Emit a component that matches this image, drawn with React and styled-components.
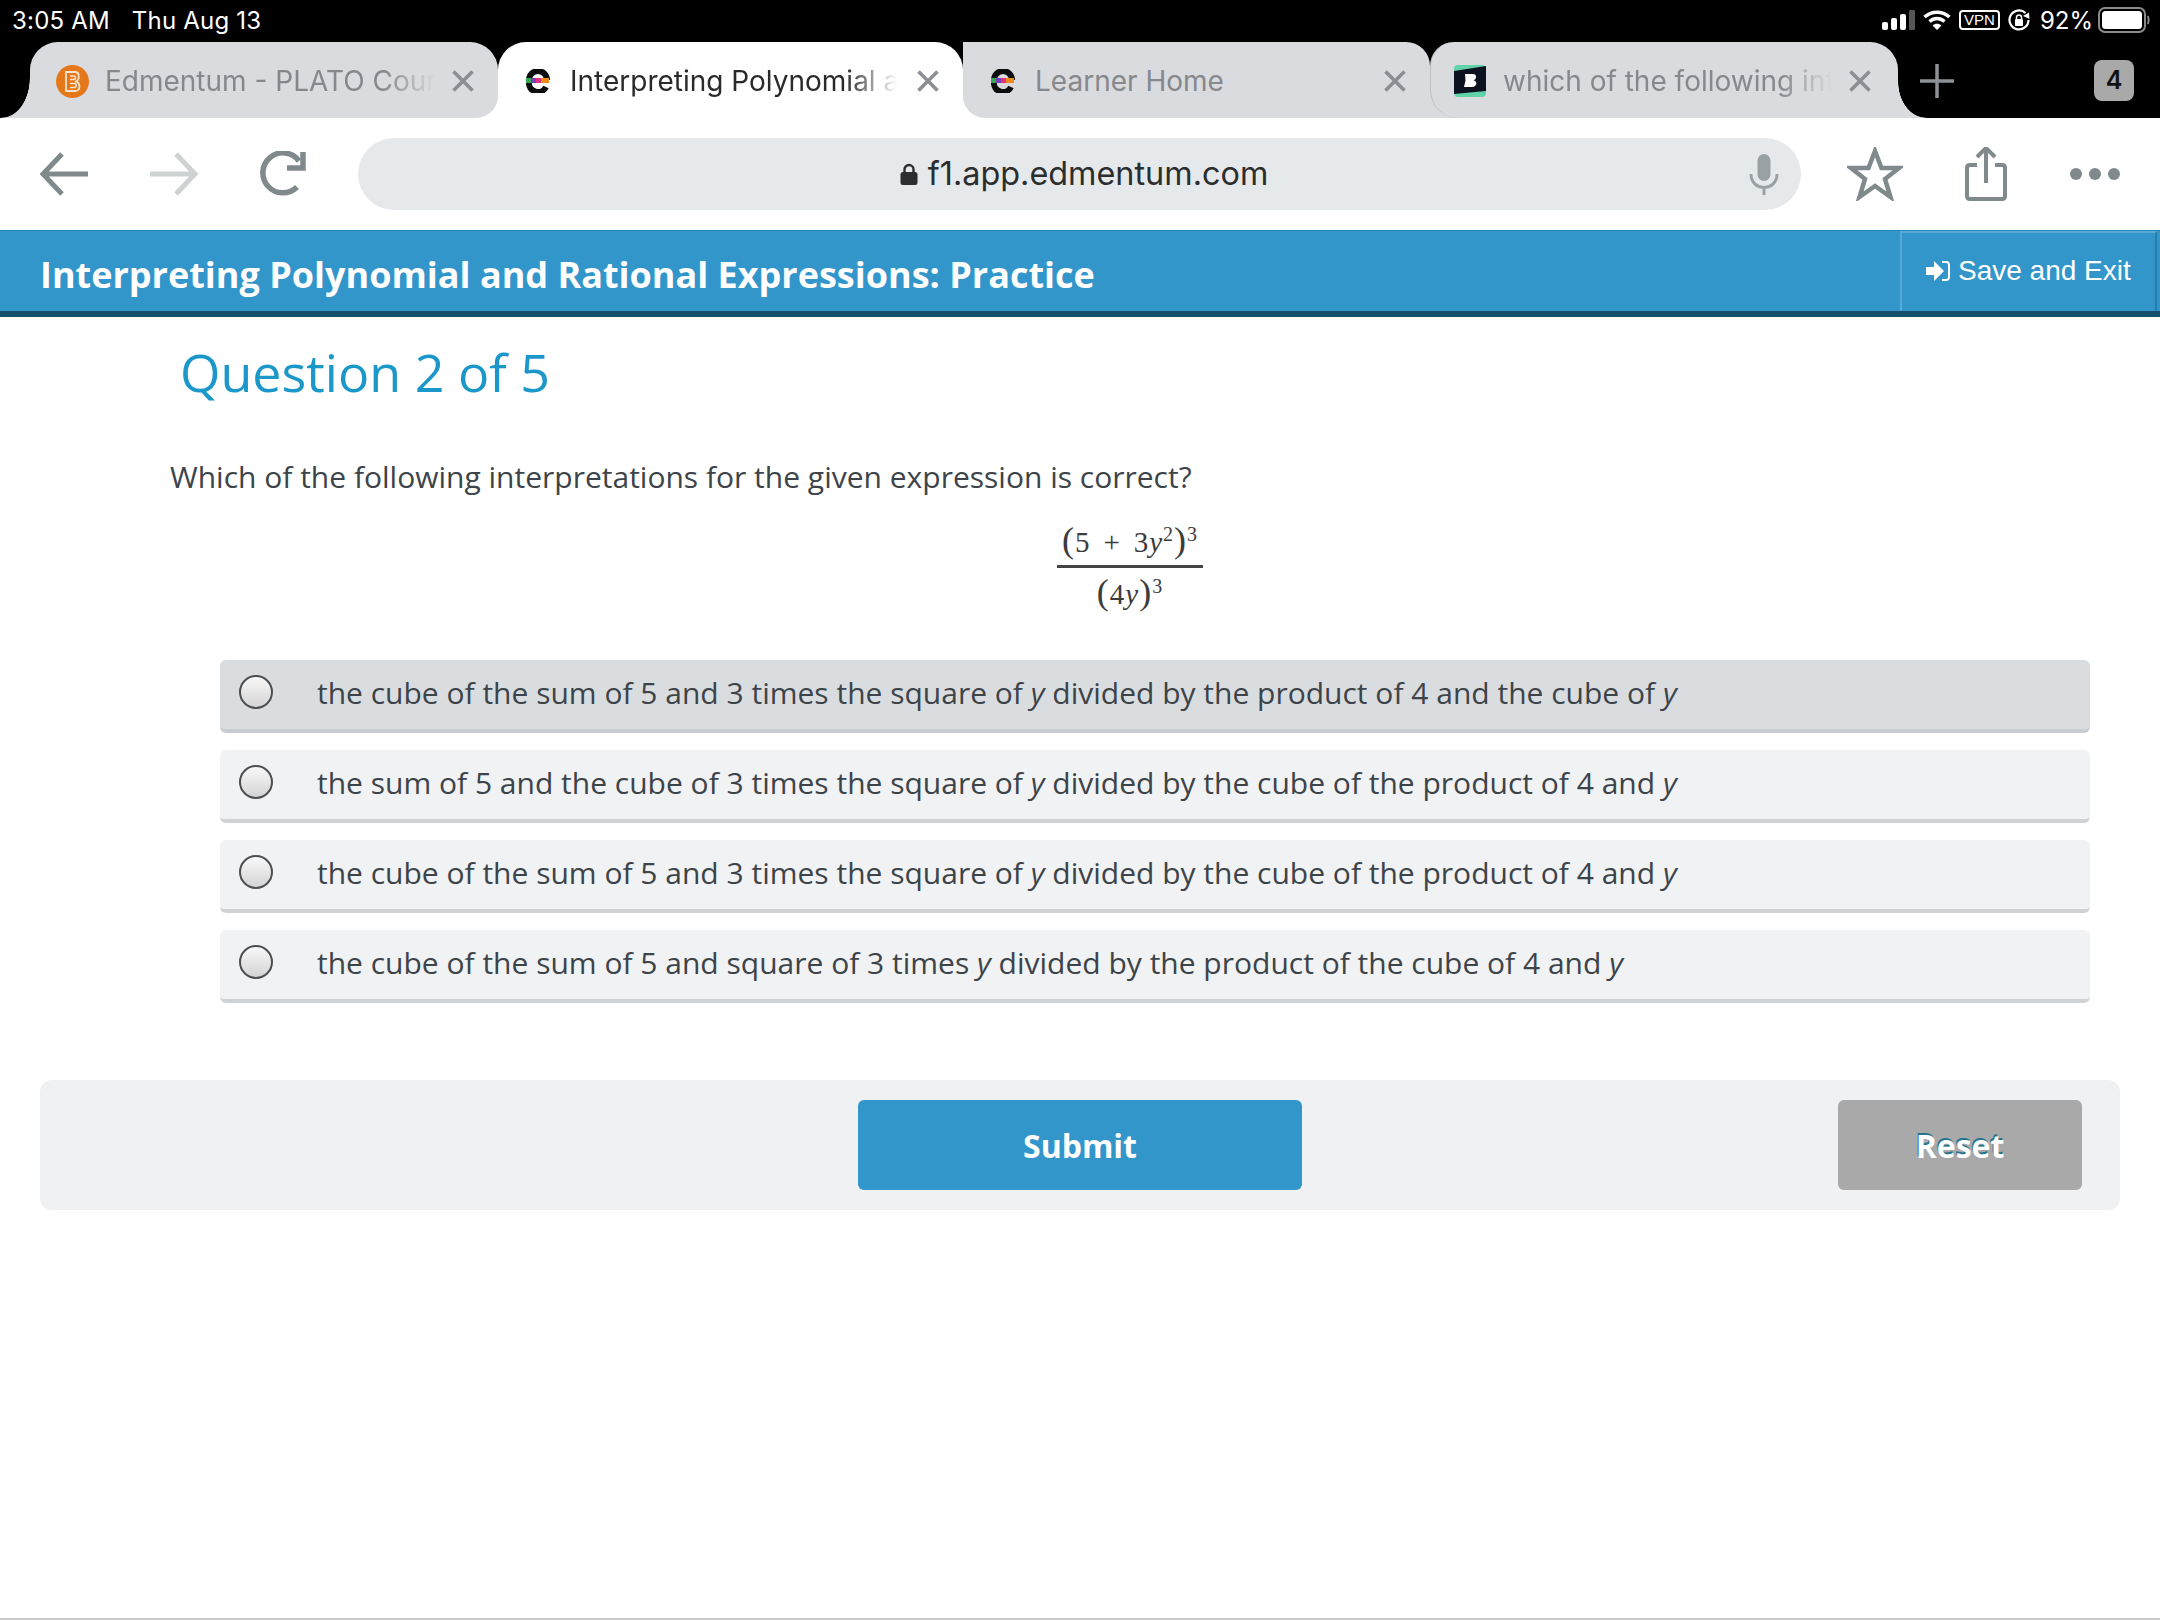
import React from "react";
import styled, { createGlobalStyle } from "styled-components";

const Global = createGlobalStyle`
  html, body { margin: 0; padding: 0; background: #fff; }
  body { font-family: "Open Sans", "Liberation Sans", sans-serif; }
  * { box-sizing: border-box; }
`;
const Page = styled.div`
  width: 2160px; height: 1620px; display: flex; flex-direction: column; overflow: hidden;
  border-bottom: 2px solid #c8c8c8; background: #fff;
`;
const StatusBar = styled.div`
  height: 42px; background: #000; color: #fff; display: flex; align-items: center;
  padding: 0 10px 2px 12px; font: 400 24px Inter, "Liberation Sans", sans-serif; flex: none;
`;
const StatusTime = styled.span` margin-right: 22px; letter-spacing: 0.2px; `;
const StatusDate = styled.span` letter-spacing: 0.2px; `;
const StatusRight = styled.div` margin-left: auto; display: flex; align-items: center; gap: 8px; `;
const StatusPercent = styled.span` margin: 0 -3px 0 2px; `;
const TabBar = styled.div`
  height: 76px; background: #000; display: flex; padding-left: 30px; flex: none;
`;
const Tab = styled.div`
  width: ${p => p.$w}px; height: 76px; position: relative; display: flex; align-items: center;
  padding: 2px ${p => p.$padRight}px 0 ${p => p.$pad}px; gap: ${p => p.$gap}px;
  font: 400 28px Inter, "Liberation Sans", sans-serif;
  color: ${p => (p.$active ? "#2a2a2c" : "#85888c")};
  background: ${p => (p.$active ? "#fff" : "#dadbdf")};
  border-radius: ${p => p.$radius};
  z-index: ${p => p.$z};
  ${p => p.$active && `
    &::before, &::after { content: ""; position: absolute; bottom: 0; width: 24px; height: 24px; background: #fff; z-index: -1; }
    &::before { left: -24px; }
    &::after { right: -24px; }
  `}
  ${p => p.$flareLeft && `
    &::before { content: ""; position: absolute; left: -28px; bottom: 0; width: 28px; height: 40px;
      background: radial-gradient(ellipse 28px 40px at 0 0, transparent 98%, #dadbdf 100%); }
  `}
  ${p => p.$flareRight && `
    &::after { content: ""; position: absolute; right: -28px; bottom: 0; width: 28px; height: 36px;
      background: radial-gradient(ellipse 28px 36px at 100% 0, transparent 98%, #dadbdf 100%); }
  `}
  ${p => p.$fillRight && `
    &::after { content: ""; position: absolute; right: -28px; bottom: 0; width: 28px; height: 40px; background: #dadbdf; }
  `}
  ${p => p.$divider && `border-left: 1.5px solid #bcbec1;`}
`;
const TabTitle = styled.span`
  flex: 1; min-width: 0; white-space: nowrap; overflow: hidden;
  -webkit-mask-image: linear-gradient(to right, #000 84%, transparent 100%);
  mask-image: linear-gradient(to right, #000 84%, transparent 100%);
`;
const PlainTitle = styled.span` flex: 1; white-space: nowrap; `;
const TabRest = styled.div` flex: 1; display: flex; align-items: center; padding: 2px 26px 0 22px; justify-content: space-between; `;
const Counter = styled.div`
  width: 40px; height: 41px; border-radius: 8px; background: #a9a9a9; color: #111; margin-top: -2px;
  display: flex; align-items: center; justify-content: center; font: 600 25px Inter, sans-serif;
`;
const Toolbar = styled.div`
  height: 112px; background: #fff; display: flex; align-items: center; flex: none; padding-left: 40px;
`;
const NavIcons = styled.div` display: flex; align-items: center; gap: 58px; width: 318px; flex: none; `;
const AddressBar = styled.div`
  width: 1443px; height: 72px; border-radius: 36px; background: #e6e9ec; position: relative; flex: none;
  display: flex; align-items: center; justify-content: center; gap: 10px;
  font: 400 32.4px/64px Inter, "Liberation Sans", sans-serif; color: #2c2d2f; padding: 0 0 0 9px;
`;
const MicSlot = styled.div` position: absolute; right: 22px; top: 15px; `;
const ToolRight = styled.div`
  display: flex; align-items: center; margin-left: 46px; gap: 62px;
`;
const HeaderBar = styled.div`
  height: 87px; background: #3296cb; border-bottom: 6px solid #14506b; border-top: 1px solid #2a87b5;
  display: flex; align-items: stretch; justify-content: space-between; flex: none; padding-left: 40px;
`;
const HeaderTitle = styled.h1`
  margin: 0; color: #fff; font: 700 36px/80px "Open Sans", sans-serif; padding-top: 4px;
`;
const SaveExit = styled.div`
  width: 257px; margin-right: 3px; border-left: 2px solid #58a9d6; border-right: 2px solid #2a7ca8; border-top: 2px solid #58a9d6;
  display: flex; align-items: center; gap: 8px; padding: 0 0 3px 24px; color: #fff;
  font: 400 28px "Liberation Sans", Arial, sans-serif;
`;
const Main = styled.main` flex: 1; display: flex; flex-direction: column; padding: 0 40px; `;
const QuestionHeading = styled.h2`
  margin: 20px 0 0 140px; font: 400 52px/70px "Open Sans", sans-serif; color: #1b98c9;
`;
const Prompt = styled.p`
  margin: 49px 0 0 130px; font: 400 30px/42px "Open Sans", sans-serif; color: #3d4449;
`;
const EquationWrap = styled.div`
  display: flex; justify-content: center; margin: 10px 0 0 100px;
`;
const Fraction = styled.div`
  display: inline-flex; flex-direction: column; align-items: center; width: 146px;
  font: 400 29px "Liberation Serif", serif; color: #3b3b3b;
`;
const Numerator = styled.div`
  width: 100%; text-align: center; border-bottom: 3px solid #444; white-space: nowrap;
  height: 60px; padding-top: 8px; line-height: 49px; letter-spacing: 1px;
`;
const Denominator = styled.div` white-space: nowrap; height: 48px; line-height: 48px; letter-spacing: 1px; `;
const Paren = styled.span` font-size: 36px; font-weight: 300; `;
const Spaced = styled.span` margin: 0 13px; `;
const Sup = styled.sup` font-size: 20px; line-height: 0; vertical-align: 11px; `;
const Options = styled.div` display: flex; flex-direction: column; gap: 17px; margin: 44px 0 0 180px; width: 1870px; `;
const Option = styled.label`
  height: 73px; border-radius: 6px; display: flex; align-items: center; padding: 0 0 4px 19px;
  background: ${p => (p.$hover ? "#dadde0" : "#f0f2f4")};
  border-bottom: 4px solid ${p => (p.$hover ? "#c9ccd0" : "#d0d3d6")};
  font: 400 30px "Open Sans", sans-serif; color: #3d4449;
`;
const Radio = styled.span`
  width: 34px; height: 34px; border-radius: 50%; border: 2px solid #4b4f52; flex: none; margin-right: 44px;
  background: linear-gradient(to bottom, #f8f8f8, #d4d4d4); margin-top: -2px;
`;
const Footer = styled.div`
  margin-top: 77px; width: 2080px; height: 130px; border-radius: 12px; background: #f0f1f3;
  display: flex; align-items: center; padding-left: 818px;
`;
const Btn = styled.button`
  width: ${p => p.$w}px; height: 90px; border: 0; border-radius: 6px; color: #fff;
  background: ${p => p.$bg}; font: 700 32px "Open Sans", sans-serif; margin-left: ${p => p.$ml || 0}px;
  ${p => p.$shadow && "text-shadow: -1px -2px 0 #26758f;"}
`;

const Close = () => (
  <svg width="22" height="22" viewBox="0 0 22 22" style={{ flex: "none" }}>
    <path d="M1.500 1.500 20.500 20.500M20.500 1.500 1.500 20.500" stroke="#8b8e92" strokeWidth="3.600" />
  </svg>
);
const EdIcon = () => (
  <svg width="24" height="24" viewBox="0 0 24 24" style={{ flex: "none" }}>
    <path d="M3 11A9 9 0 0 1 21 11" fill="none" stroke="#0c0c0c" strokeWidth="6" />
    <path d="M3 13A9 9 0 0 0 20 18" fill="none" stroke="#0c0c0c" strokeWidth="6" />
    <rect x="0" y="9" width="5" height="5" fill="#35a853" />
    <rect x="5" y="9" width="5" height="5" fill="#7b3fb5" />
    <rect x="10" y="9" width="5" height="5" fill="#e0337f" />
    <rect x="15" y="9" width="8" height="5" fill="#f08a1d" />
  </svg>
);
const OrangeIcon = () => (
  <svg width="33" height="33" viewBox="0 0 33 33" style={{ flex: "none" }}>
    <circle cx="16.500" cy="16.500" r="16.500" fill="#e5781a" />
    <path d="M10 7H19C24 7 24 16 19 16.500C25 17 25 26 19 26H10Z" fill="none" stroke="#fbe3cc" strokeWidth="1.800" />
    <path d="M14 11H18C20 11 20 14.500 18 14.500H14M14 18.500H18C21 18.500 21 22.500 18 22.500H14" fill="none" stroke="#fbe3cc" strokeWidth="1.600" />
  </svg>
);
const BrainlyIcon = () => (
  <svg width="32" height="32" viewBox="0 0 32 32" style={{ flex: "none" }}>
    <rect width="32" height="32" rx="4" fill="#60d4a8" />
    <path d="M0 6 32 1V26L0 29Z" fill="#0d1220" />
    <path d="M11 9H19C23 9 23 14.500 19.500 15.200C24 16 23 22 18 22H10L11.500 15.500Z" fill="#fff" />
  </svg>
);
const Back = ({ c }) => (
  <svg width="50" height="44" viewBox="0 0 50 44">
    <path d="M48 22H4M22 2 3 22 22 42" fill="none" stroke={c} strokeWidth="5" />
  </svg>
);
const Forward = ({ c }) => (
  <svg width="50" height="44" viewBox="0 0 50 44">
    <path d="M2 22H46M28 2 47 22 28 42" fill="none" stroke={c} strokeWidth="5" />
  </svg>
);
const Reload = () => (
  <svg width="51" height="46" viewBox="-5 0 51 46">
    <path d="M36 36A20 20 0 1 1 38 10" fill="none" stroke="#808a8d" strokeWidth="5.500" />
    <path d="M42 1V17H26" fill="none" stroke="#808a8d" strokeWidth="5.500" />
  </svg>
);
const Mic = () => (
  <svg width="30" height="42" viewBox="0 0 30 42">
    <rect x="8.500" y="0" width="13" height="27" rx="6.500" fill="#9aa1a5" />
    <path d="M2 20C2 38 28 38 28 20M15 32V41" fill="none" stroke="#9aa1a5" strokeWidth="3" />
  </svg>
);
const Star = () => (
  <svg width="56" height="54" viewBox="0 0 56 54">
    <path d="M28 4 34.500 21H52L38 32 43.500 50 28 39 12.500 50 18 32 4 21H21.500Z" fill="none" stroke="#808a8d" strokeWidth="4.500" />
  </svg>
);
const Share = () => (
  <svg width="42" height="54" viewBox="0 0 42 54">
    <path d="M12 18H5C3 18 2 19 2 21V49C2 51 3 52 5 52H37C39 52 40 51 40 49V21C40 19 39 18 37 18H30M21 36V2M12 10 21 1 30 10" fill="none" stroke="#808a8d" strokeWidth="4" />
  </svg>
);
const Dots = () => (
  <svg width="52" height="14" viewBox="0 0 52 14">
    <circle cx="7" cy="7" r="6" fill="#808a8d" /><circle cx="26" cy="7" r="6" fill="#808a8d" /><circle cx="45" cy="7" r="6" fill="#808a8d" />
  </svg>
);
const Lock = () => (
  <svg width="18" height="22" viewBox="0 0 18 22">
    <path d="M4.500 10V6.500A4.500 4.500 0 0 1 13.500 6.500V10" fill="none" stroke="#2c2d2f" strokeWidth="2.400" />
    <rect x="0.500" y="9" width="17" height="13" rx="2.500" fill="#2c2d2f" />
  </svg>
);
const Plus = () => (
  <svg width="34" height="34" viewBox="0 0 34 34">
    <path d="M17 0V34M0 17H34" stroke="#8e9296" strokeWidth="3.500" />
  </svg>
);
const SignalIcon = () => (
  <svg width="33" height="20" viewBox="0 0 33 20">
    <rect x="0" y="12" width="6" height="8" rx="2" fill="#fff" /><rect x="9" y="8" width="6" height="12" rx="2" fill="#fff" />
    <rect x="18" y="4" width="6" height="16" rx="2" fill="#fff" /><rect x="27" y="0" width="6" height="20" rx="1" fill="#555" />
  </svg>
);
const WifiIcon = () => (
  <svg width="28" height="20" viewBox="0 0 28 20">
    <path d="M1.500 7C9 0.500 19 0.500 26.500 7M6.500 11.500C11 7.500 17 7.500 21.500 11.500" fill="none" stroke="#fff" strokeWidth="3.500" />
    <path d="M14 20 9.500 15.500C12 13 16 13 18.500 15.500Z" fill="#fff" />
  </svg>
);
const VpnBadge = styled.span`
  border: 2px solid #fff; border-radius: 4px; font: 400 15px/16px "Liberation Sans", sans-serif; height: 20px;
  width: 41px; text-align: center;
`;
const RotateIcon = () => (
  <svg width="22" height="24" viewBox="0 0 22 24">
    <path d="M17.500 5A9.500 9.500 0 1 0 20.500 12" fill="none" stroke="#fff" strokeWidth="2.200" />
    <path d="M15 8 21 4.500 21.500 11Z" fill="#fff" />
    <rect x="7" y="11" width="8" height="7" rx="1" fill="#fff" />
    <path d="M8.500 11V9.500A2.500 2.500 0 0 1 13.500 9.500V11" fill="none" stroke="#fff" strokeWidth="1.500" />
  </svg>
);
const Battery = () => (
  <svg width="52" height="26" viewBox="0 0 52 26">
    <rect x="1" y="1" width="46" height="24" rx="6" fill="none" stroke="#8a8a8a" strokeWidth="2" />
    <rect x="4" y="4" width="40" height="18" rx="3.500" fill="#fff" />
    <path d="M49.500 9C51 10 51 16 49.500 17" fill="none" stroke="#8a8a8a" strokeWidth="2" />
  </svg>
);
const SignIn = () => (
  <svg width="24" height="22" viewBox="0 0 24 22">
    <path d="M0 7H8V1L18 11 8 21V15H0Z" fill="#fff" />
    <path d="M16 2H20C22 2 23 3 23 5V17C23 19 22 20 20 20H16" fill="none" stroke="#fff" strokeWidth="2" />
  </svg>
);
const Em = styled.i` font-style: italic; `;

const answers = [
  <>the cube of the sum of 5 and 3 times the square of <Em>y</Em> divided by the product of 4 and the cube of <Em>y</Em></>,
  <>the sum of 5 and the cube of 3 times the square of <Em>y</Em> divided by the cube of the product of 4 and <Em>y</Em></>,
  <>the cube of the sum of 5 and 3 times the square of <Em>y</Em> divided by the cube of the product of 4 and <Em>y</Em></>,
  <>the cube of the sum of 5 and square of 3 times <Em>y</Em> divided by the product of the cube of 4 and <Em>y</Em></>,
];

export default function App() {
  return (
    <Page>
      <Global />
      <StatusBar>
        <StatusTime>3:05 AM</StatusTime>
        <StatusDate>Thu Aug 13</StatusDate>
        <StatusRight>
          <SignalIcon /><WifiIcon /><VpnBadge>VPN</VpnBadge><RotateIcon />
          <StatusPercent>92%</StatusPercent><Battery />
        </StatusRight>
      </StatusBar>
      <TabBar>
        <Tab $w={468} $z={1} $pad={26} $padRight={24} $gap={16} $flareLeft $radius="28px 28px 22px 0"><OrangeIcon /><TabTitle>Edmentum - PLATO Course</TabTitle><Close /></Tab>
        <Tab $w={465} $z={0} $active $pad={28} $padRight={24} $gap={20} $radius="28px 28px 0 0"><EdIcon /><TabTitle>Interpreting Polynomial and Rational</TabTitle><Close /></Tab>
        <Tab $w={467} $z={1} $pad={28} $padRight={24} $gap={20} $fillRight $radius="0 24px 0 22px"><EdIcon /><PlainTitle>Learner Home</PlainTitle><Close /></Tab>
        <Tab $w={468} $z={2} $pad={23} $padRight={27} $gap={17} $divider $flareRight $radius="24px 28px 0 28px"><BrainlyIcon /><TabTitle>which of the following interpretations</TabTitle><Close /></Tab>
        <TabRest><Plus /><Counter>4</Counter></TabRest>
      </TabBar>
      <Toolbar>
        <NavIcons><Back c="#808a8d" /><Forward c="#cfd2d3" /><Reload /></NavIcons>
        <AddressBar><Lock />f1.app.edmentum.com<MicSlot><Mic /></MicSlot></AddressBar>
        <ToolRight><Star /><Share /><Dots /></ToolRight>
      </Toolbar>
      <HeaderBar>
        <HeaderTitle>Interpreting Polynomial and Rational Expressions: Practice</HeaderTitle>
        <SaveExit><SignIn />Save and Exit</SaveExit>
      </HeaderBar>
      <Main>
        <QuestionHeading>Question 2 of 5</QuestionHeading>
        <Prompt>Which of the following interpretations for the given expression is correct?</Prompt>
        <EquationWrap>
          <Fraction>
            <Numerator><Paren>(</Paren>5<Spaced>+</Spaced>3<Em>y</Em><Sup>2</Sup><Paren>)</Paren><Sup>3</Sup></Numerator>
            <Denominator><Paren>(</Paren>4<Em>y</Em><Paren>)</Paren><Sup>3</Sup></Denominator>
          </Fraction>
        </EquationWrap>
        <Options>
          {answers.map((a, i) => (
            <Option key={i} $hover={i === 0}><Radio /><span>{a}</span></Option>
          ))}
        </Options>
        <Footer>
          <Btn $w={444} $bg="#3296cb">Submit</Btn>
          <Btn $w={244} $bg="#a9a9a9" $ml={536} $shadow>Reset</Btn>
        </Footer>
      </Main>
    </Page>
  );
}
